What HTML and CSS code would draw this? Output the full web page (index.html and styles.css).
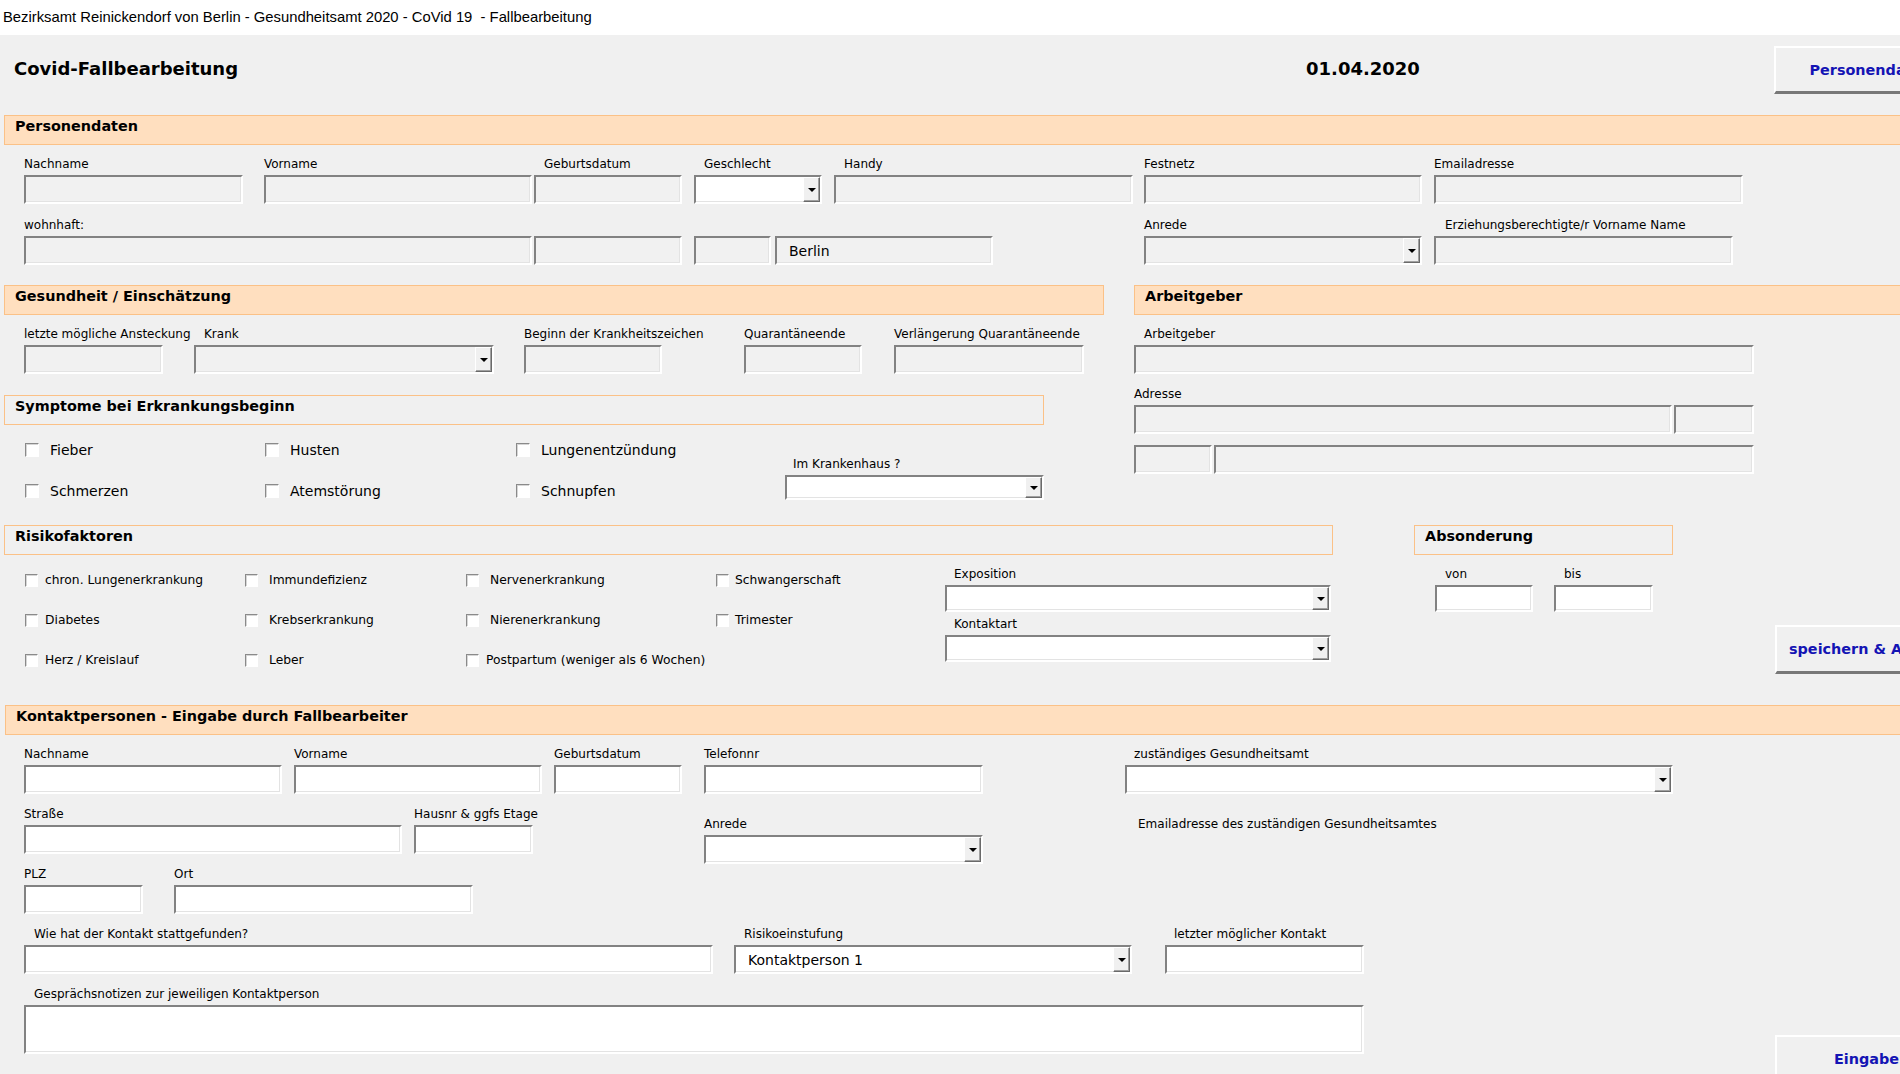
FILE: index.html
```html
<!DOCTYPE html>
<html lang="de">
<head>
<meta charset="utf-8">
<title>Covid-Fallbearbeitung</title>
<link rel="stylesheet" href="styles.css">
</head>
<body>
<div class="titlebar">Bezirksamt Reinickendorf von Berlin - Gesundheitsamt 2020 - CoVid 19  - Fallbearbeitung</div>
<div class="form">
  <div class="head">
    <h1 class="head-title">Covid-Fallbearbeitung</h1>
    <div class="head-date">01.04.2020</div>
    <div class="cmd cmd-top">Personendaten</div>
  </div>

  <div class="bar bar-wide">Personendaten</div>
  <div class="row rp1">
    <div class="fld p-nach"><div class="lbl">Nachname</div><div class="box"></div></div>
    <div class="fld p-vor"><div class="lbl">Vorname</div><div class="box"></div></div>
    <div class="fld p-geb li10"><div class="lbl">Geburtsdatum</div><div class="box"></div></div>
    <div class="fld p-ges li10"><div class="lbl">Geschlecht</div><div class="box white sel"><span class="arrow"></span></div></div>
    <div class="fld p-handy li10"><div class="lbl">Handy</div><div class="box"></div></div>
    <div class="fld p-fest"><div class="lbl">Festnetz</div><div class="box"></div></div>
    <div class="fld p-mail"><div class="lbl">Emailadresse</div><div class="box"></div></div>
  </div>
  <div class="row rp2">
    <div class="fld p-wohn"><div class="lbl">wohnhaft:</div><div class="box"></div></div>
    <div class="fld p-hnr"><div class="lbl">&nbsp;</div><div class="box"></div></div>
    <div class="fld p-plz"><div class="lbl">&nbsp;</div><div class="box"></div></div>
    <div class="fld p-ort"><div class="lbl">&nbsp;</div><div class="box">Berlin</div></div>
    <div class="fld p-anr"><div class="lbl">Anrede</div><div class="box sel"><span class="arrow"></span></div></div>
    <div class="fld p-erz li11"><div class="lbl">Erziehungsberechtigte/r Vorname Name</div><div class="box"></div></div>
  </div>

  <div class="split">
    <div class="col-health">
      <div class="bar">Gesundheit / Einschätzung</div>
      <div class="row rh1">
        <div class="fld h-anst"><div class="lbl">letzte mögliche Ansteckung</div><div class="box"></div></div>
        <div class="fld h-krank li10"><div class="lbl">Krank</div><div class="box sel"><span class="arrow"></span></div></div>
        <div class="fld h-beginn"><div class="lbl">Beginn der Krankheitszeichen</div><div class="box"></div></div>
        <div class="fld h-quar"><div class="lbl">Quarantäneende</div><div class="box"></div></div>
        <div class="fld h-verl"><div class="lbl">Verlängerung Quarantäneende</div><div class="box"></div></div>
      </div>
      <div class="bar outline bar-sym">Symptome bei Erkrankungsbeginn</div>
      <div class="row rsym">
        <div class="sym-grid">
          <label class="chk"><span class="cb"></span>Fieber</label>
          <label class="chk"><span class="cb"></span>Husten</label>
          <label class="chk"><span class="cb"></span>Lungenentzündung</label>
          <label class="chk"><span class="cb"></span>Schmerzen</label>
          <label class="chk"><span class="cb"></span>Atemstörung</label>
          <label class="chk"><span class="cb"></span>Schnupfen</label>
        </div>
        <div class="fld h-kh li8"><div class="lbl">Im Krankenhaus ?</div><div class="box white sel"><span class="arrow"></span></div></div>
      </div>
    </div>
    <div class="col-emp">
      <div class="bar bar-emp">Arbeitgeber</div>
      <div class="fld e-name li10"><div class="lbl">Arbeitgeber</div><div class="box"></div></div>
      <div class="fld e-addr"><div class="lbl">Adresse</div>
        <div class="pair"><div class="box e-str"></div><div class="box e-nr"></div></div>
      </div>
      <div class="pair e-row3"><div class="box e-plz"></div><div class="box e-ort"></div></div>
    </div>
  </div>

  <div class="risk-area">
    <div class="col-risk">
      <div class="bar outline">Risikofaktoren</div>
      <div class="row rrisk">
        <div class="risk-grid">
          <label class="chk"><span class="cb"></span>chron. Lungenerkrankung</label>
          <label class="chk wide"><span class="cb"></span>Immundefizienz</label>
          <label class="chk wide"><span class="cb"></span>Nervenerkrankung</label>
          <label class="chk narrow"><span class="cb"></span>Schwangerschaft</label>
          <label class="chk"><span class="cb"></span>Diabetes</label>
          <label class="chk wide"><span class="cb"></span>Krebserkrankung</label>
          <label class="chk wide"><span class="cb"></span>Nierenerkrankung</label>
          <label class="chk narrow"><span class="cb"></span>Trimester</label>
          <label class="chk"><span class="cb"></span>Herz / Kreislauf</label>
          <label class="chk wide"><span class="cb"></span>Leber</label>
          <label class="chk"><span class="cb"></span>Postpartum (weniger als 6 Wochen)</label>
        </div>
        <div class="expo">
          <div class="fld li9"><div class="lbl">Exposition</div><div class="box white sel s27"><span class="arrow"></span></div></div>
          <div class="fld x-kart li9"><div class="lbl">Kontaktart</div><div class="box white sel s27"><span class="arrow"></span></div></div>
        </div>
      </div>
    </div>
    <div class="col-abs">
      <div class="bar outline">Absonderung</div>
      <div class="row rabs">
        <div class="fld a-von li10"><div class="lbl">von</div><div class="box white s27"></div></div>
        <div class="fld a-bis li10"><div class="lbl">bis</div><div class="box white s27"></div></div>
      </div>
    </div>
    <div class="cmd cmd-save">speichern &amp; Abschließen</div>
  </div>

  <div class="bar bar-wide bar-kontakt">Kontaktpersonen - Eingabe durch Fallbearbeiter</div>
  <div class="row rk1">
    <div class="fld k-nach"><div class="lbl">Nachname</div><div class="box white"></div></div>
    <div class="fld k-vor"><div class="lbl">Vorname</div><div class="box white"></div></div>
    <div class="fld k-geb"><div class="lbl">Geburtsdatum</div><div class="box white"></div></div>
    <div class="fld k-tel"><div class="lbl">Telefonnr</div><div class="box white"></div></div>
    <div class="fld k-ga li9"><div class="lbl">zuständiges Gesundheitsamt</div><div class="box white sel"><span class="arrow"></span></div></div>
  </div>
  <div class="row rk2">
    <div class="k-left">
      <div class="row">
        <div class="fld k-str"><div class="lbl">Straße</div><div class="box white"></div></div>
        <div class="fld k-hnr"><div class="lbl">Hausnr &amp; ggfs Etage</div><div class="box white"></div></div>
      </div>
      <div class="row rk3">
        <div class="fld k-plz"><div class="lbl">PLZ</div><div class="box white"></div></div>
        <div class="fld k-ort"><div class="lbl">Ort</div><div class="box white"></div></div>
      </div>
    </div>
    <div class="fld k-anr"><div class="lbl">Anrede</div><div class="box white sel"><span class="arrow"></span></div></div>
    <div class="lbl k-mail">Emailadresse des zuständigen Gesundheitsamtes</div>
  </div>
  <div class="row rk4">
    <div class="fld k-wie li10"><div class="lbl">Wie hat der Kontakt stattgefunden?</div><div class="box white"></div></div>
    <div class="fld k-risk li10"><div class="lbl">Risikoeinstufung</div><div class="box white sel">Kontaktperson 1<span class="arrow"></span></div></div>
    <div class="fld k-letzt li9"><div class="lbl">letzter möglicher Kontakt</div><div class="box white"></div></div>
  </div>
  <div class="row rk5">
    <div class="fld k-notes li10"><div class="lbl">Gesprächsnotizen zur jeweiligen Kontaktperson</div><div class="box white notes"></div></div>
    <div class="cmd cmd-enter">Eingabe Kontaktperson</div>
  </div>
</div>
</body>
</html>
```

FILE: styles.css
```css
* { box-sizing: border-box; }
html, body { margin: 0; padding: 0; }
body {
  width: 1900px;
  height: 1074px;
  overflow: hidden;
  background: #f0f0f0;
  font-family: "DejaVu Sans", Verdana, sans-serif;
  font-size: 12px;
  color: #000;
}

.titlebar {
  height: 35px;
  background: #fff;
  font-family: "Liberation Sans", Arial, sans-serif;
  font-size: 14.8px;
  line-height: 35px;
  padding-left: 3px;
  white-space: pre;
}

/* header */
.head { display: flex; align-items: center; height: 48px; margin: 11px 0 21px; }
.head-title { flex: 0 0 1306px; margin: 0; padding: 0 0 4px 14px; font-size: 18px; font-weight: bold; }
.head-date { flex: 0 0 468px; padding-bottom: 3px; font-size: 18px; font-weight: bold; }

.cmd {
  display: flex;
  align-items: center;
  justify-content: center;
  flex: 0 0 192px;
  background: #f0f0f0;
  border-top: 2px solid #fff;
  border-left: 2px solid #fff;
  border-bottom: 3px solid #787878;
  color: #1414b4;
  font-weight: bold;
  font-size: 14.4px;
  white-space: nowrap;
}
.cmd-top { height: 48px; }

/* section bars */
.bar {
  height: 30px;
  border: 1px solid #fbc187;
  background: #ffdfbf;
  padding: 2px 10px 0;
  font-weight: bold;
  font-size: 14.4px;
  line-height: 17px;
  white-space: nowrap;
}
.bar.outline { background: transparent; }
.bar-wide { margin-left: 4px; width: 1920px; }

/* fields */
.row { display: flex; align-items: flex-start; }
.fld { display: flex; flex-direction: column; flex: 0 0 auto; }
.lbl { height: 16px; line-height: 16px; margin-bottom: 3px; white-space: nowrap; font-size: 12px; }
.li8 > .lbl { padding-left: 8px; }
.li9 > .lbl { padding-left: 9px; }
.li10 > .lbl { padding-left: 10px; }
.li11 > .lbl { padding-left: 11px; }

.box {
  height: 29px;
  border: 2px solid;
  border-color: #828282 #fff #fff #828282;
  box-shadow: inset -1px -1px 0 #e3e3e3;
  background: #f1f1f1;
  display: flex;
  align-items: center;
  padding-left: 12px;
  font-size: 14px;
  white-space: nowrap;
}
.box.white { background: #fff; }
.box.s27 { height: 27px; }
.box.sel { padding-right: 0; }

.arrow {
  margin-left: auto;
  width: 17px;
  align-self: stretch;
  background: #f0f0f0;
  border: 1px solid;
  border-color: #fff #6a6a6a #6a6a6a #fff;
  box-shadow: inset -1px -1px 0 #a0a0a0;
  display: flex;
  align-items: center;
  justify-content: center;
}
.arrow::after {
  content: "";
  border-left: 4px solid transparent;
  border-right: 4px solid transparent;
  border-top: 4px solid #000;
}

.chk { display: flex; align-items: center; gap: 8px; white-space: nowrap; }
.cb {
  flex: 0 0 auto;
  width: 13px;
  height: 13px;
  border: 1px solid;
  border-color: #8a8a8a #fff #fff #8a8a8a;
  box-shadow: inset 1px 1px 0 #d6d6d6;
  background: #fff;
}

/* Personendaten */
.rp1 { margin-top: 11px; padding-left: 24px; }
.rp2 { margin-top: 13px; padding-left: 24px; }
.p-nach { width: 219px; }
.p-vor { width: 268px; margin-left: 21px; }
.p-geb { width: 148px; margin-left: 2px; }
.p-ges { width: 128px; margin-left: 12px; }
.p-handy { width: 299px; margin-left: 12px; }
.p-fest { width: 278px; margin-left: 11px; }
.p-mail { width: 309px; margin-left: 12px; }
.p-wohn { width: 508px; }
.p-hnr { width: 148px; margin-left: 2px; }
.p-plz { width: 77px; margin-left: 12px; }
.p-ort { width: 218px; margin-left: 4px; }
.p-anr { width: 278px; margin-left: 151px; }
.p-erz { width: 299px; margin-left: 12px; }

/* Gesundheit / Arbeitgeber */
.split { display: flex; align-items: flex-start; margin-top: 20px; }
.col-health { flex: 0 0 1100px; margin-left: 4px; }
.rh1 { margin-top: 11px; padding-left: 20px; }
.h-anst { width: 139px; }
.h-krank { width: 300px; margin-left: 31px; }
.h-beginn { width: 138px; margin-left: 30px; }
.h-quar { width: 118px; margin-left: 82px; }
.h-verl { width: 190px; margin-left: 32px; }
.bar-sym { width: 1040px; margin-top: 21px; }
.rsym { margin-top: 4px; }
.sym-grid {
  margin-left: 21px;
  display: grid;
  grid-template-columns: 240px 251px 269px;
  grid-auto-rows: 41px;
  align-items: center;
}
.sym-grid .chk { font-size: 14px; gap: 11px; }
.sym-grid .cb { width: 14px; height: 14px; }
.h-kh { width: 259px; margin-top: 27px; }
.h-kh .box { height: 25px; }

.col-emp { flex: 0 0 800px; margin-left: 30px; }
.e-name { width: 620px; margin-top: 11px; }
.e-addr { width: 620px; margin-top: 12px; }
.pair { display: flex; gap: 2px; }
.e-str { width: 538px; }
.e-nr { width: 80px; }
.e-row3 { margin-top: 11px; }
.e-plz { width: 78px; }
.e-ort { width: 540px; }

/* Risikofaktoren */
.risk-area { display: flex; align-items: flex-start; margin-top: 14px; }
.col-risk { flex: 0 0 1329px; margin-left: 4px; }
.rrisk { margin-top: 5px; }
.risk-grid {
  margin-left: 21px;
  display: grid;
  grid-template-columns: 220px 221px 250px 229px;
  grid-auto-rows: 40px;
  align-items: center;
}
.risk-grid .chk { font-size: 12.3px; gap: 7px; }
.risk-grid .chk.wide { gap: 11px; }
.risk-grid .chk.narrow { gap: 6px; }
.expo { width: 386px; margin-top: 6px; }
.x-kart { margin-top: 4px; }

.col-abs { flex: 0 0 259px; margin-left: 81px; }
.rabs { margin-top: 11px; }
.a-von { width: 98px; margin-left: 21px; }
.a-bis { width: 99px; margin-left: 21px; }

.cmd-save {
  flex: 0 0 220px;
  height: 49px;
  margin-left: 102px;
  margin-top: 100px;
  justify-content: flex-start;
  padding-left: 12px;
}

/* Kontaktpersonen */
.bar-kontakt { margin-top: 25px; margin-left: 5px; }
.rk1 { margin-top: 11px; padding-left: 24px; }
.k-nach { width: 258px; }
.k-vor { width: 248px; margin-left: 12px; }
.k-geb { width: 128px; margin-left: 12px; }
.k-tel { width: 279px; margin-left: 22px; }
.k-ga { width: 548px; margin-left: 142px; }
.rk2 { margin-top: 12px; padding-left: 24px; }
.k-left { flex: 0 0 509px; }
.k-str { width: 378px; }
.k-hnr { width: 119px; margin-left: 12px; }
.rk3 { margin-top: 12px; }
.k-plz { width: 119px; }
.k-ort { width: 299px; margin-left: 31px; }
.k-anr { width: 279px; margin-left: 171px; margin-top: 10px; }
.k-mail { margin-left: 155px; margin-top: 10px; }
.rk4 { margin-top: 12px; padding-left: 24px; }
.k-wie { width: 689px; }
.k-risk { width: 398px; margin-left: 21px; }
.k-letzt { width: 199px; margin-left: 33px; }
.rk5 { margin-top: 12px; padding-left: 24px; }
.k-notes { width: 1340px; }
.box.notes { height: 49px; }
.cmd-enter {
  flex: 0 0 240px;
  height: 60px;
  margin-left: 411px;
  margin-top: 49px;
  align-items: flex-start;
  justify-content: flex-start;
  padding: 14px 0 0 57px;
}
```
